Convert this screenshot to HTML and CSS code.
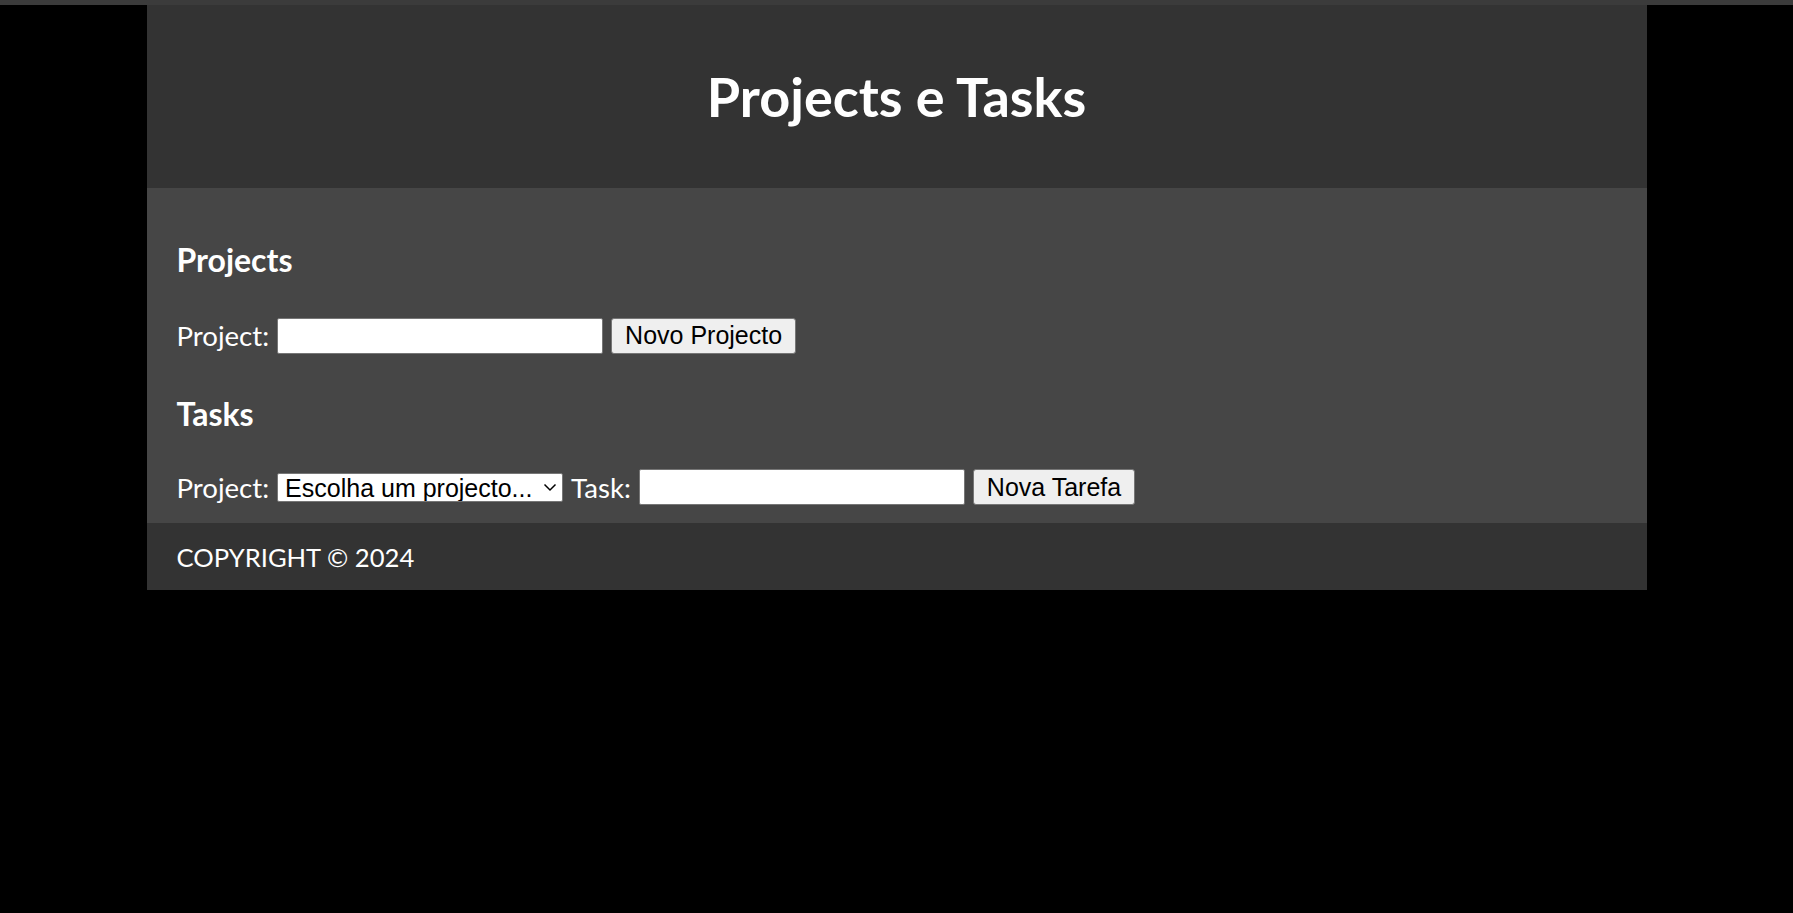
FILE: index.html
```html
<!DOCTYPE html>
<html lang="pt">
<head>
<meta charset="utf-8">
<title>Projects e Tasks</title>
<link rel="stylesheet" href="styles.css">
</head>
<body>
<div class="page">
  <header class="site-header">
    <h1 class="title">Projects e Tasks</h1>
  </header>
  <main class="content">
    <h2 class="section-title">Projects</h2>
    <form class="row">
      <label class="label" for="project-name">Project:</label>
      <input class="text-input" id="project-name" type="text">
      <button class="btn btn-project" type="button">Novo Projecto</button>
    </form>
    <h2 class="section-title section-tasks">Tasks</h2>
    <form class="row row-tasks">
      <label class="label" for="project-select">Project:</label>
      <span class="select-wrap">
        <select class="select" id="project-select">
          <option>Escolha um projecto...</option>
        </select>
        <svg class="chevron" width="14" height="9" viewBox="0 0 14 9" aria-hidden="true"><path d="M1.5 1.5 L7 7 L12.5 1.5" fill="none" stroke="#000" stroke-width="1.5"/></svg>
      </span>
      <label class="label" for="task-name">Task:</label>
      <input class="text-input" id="task-name" type="text">
      <button class="btn btn-task" type="button">Nova Tarefa</button>
    </form>
  </main>
  <footer class="site-footer">
    <p class="copyright">COPYRIGHT © 2024</p>
  </footer>
</div>
</body>
</html>
```

FILE: styles.css
```css
* { box-sizing: border-box; }
html, body { margin: 0; padding: 0; }
body {
  background: #000;
  border-top: 5px solid #3b3b3b;
  font-family: Lato, "Open Sans", sans-serif;
  color: #fff;
}
.page { max-width: 1500px; margin: 0 auto; }
.site-header {
  background: #333;
  height: 183px;
  display: flex;
  align-items: center;
  justify-content: center;
}
.title { margin: 0; font-size: 54px; font-weight: 700; line-height: 1; }
.content {
  background: #464646;
  padding: 51px 30px 18px;
  display: flex;
  flex-direction: column;
}
.section-title {
  margin: 0;
  height: 40px;
  display: flex;
  align-items: center;
  font-size: 32px;
  font-weight: 700;
}
.section-tasks { margin-top: 40px; }
.row {
  margin: 39px 0 0;
  height: 35px;
  display: flex;
  align-items: center;
  gap: 8px;
}
.row-tasks { margin-top: 36px; height: 36px; }
.label { font-size: 27.6px; }
.text-input {
  width: 326px;
  height: 36px;
  border: 1px solid #767676;
  border-radius: 2px;
  background: #fff;
  font: 25px "Liberation Sans", Arial, sans-serif;
}
.btn {
  height: 36px;
  padding: 0 13px;
  border: 1px solid #767676;
  border-radius: 3px;
  background: #efefef;
  color: #000;
  font: 25px "Liberation Sans", Arial, sans-serif;
}
.select-wrap { position: relative; display: inline-flex; }
.select {
  appearance: none;
  -webkit-appearance: none;
  width: 286px;
  height: 29px;
  padding: 0 0 0 7px;
  border: 1px solid #767676;
  border-radius: 2px;
  background: #fff;
  color: #000;
  font: 25px "Liberation Sans", Arial, sans-serif;
}
.chevron { position: absolute; right: 6px; top: 10px; pointer-events: none; }
.site-footer {
  background: #333;
  height: 67px;
  display: flex;
  align-items: center;
  padding: 0 30px;
}
.copyright { margin: 0; font-size: 25.6px; }
```
